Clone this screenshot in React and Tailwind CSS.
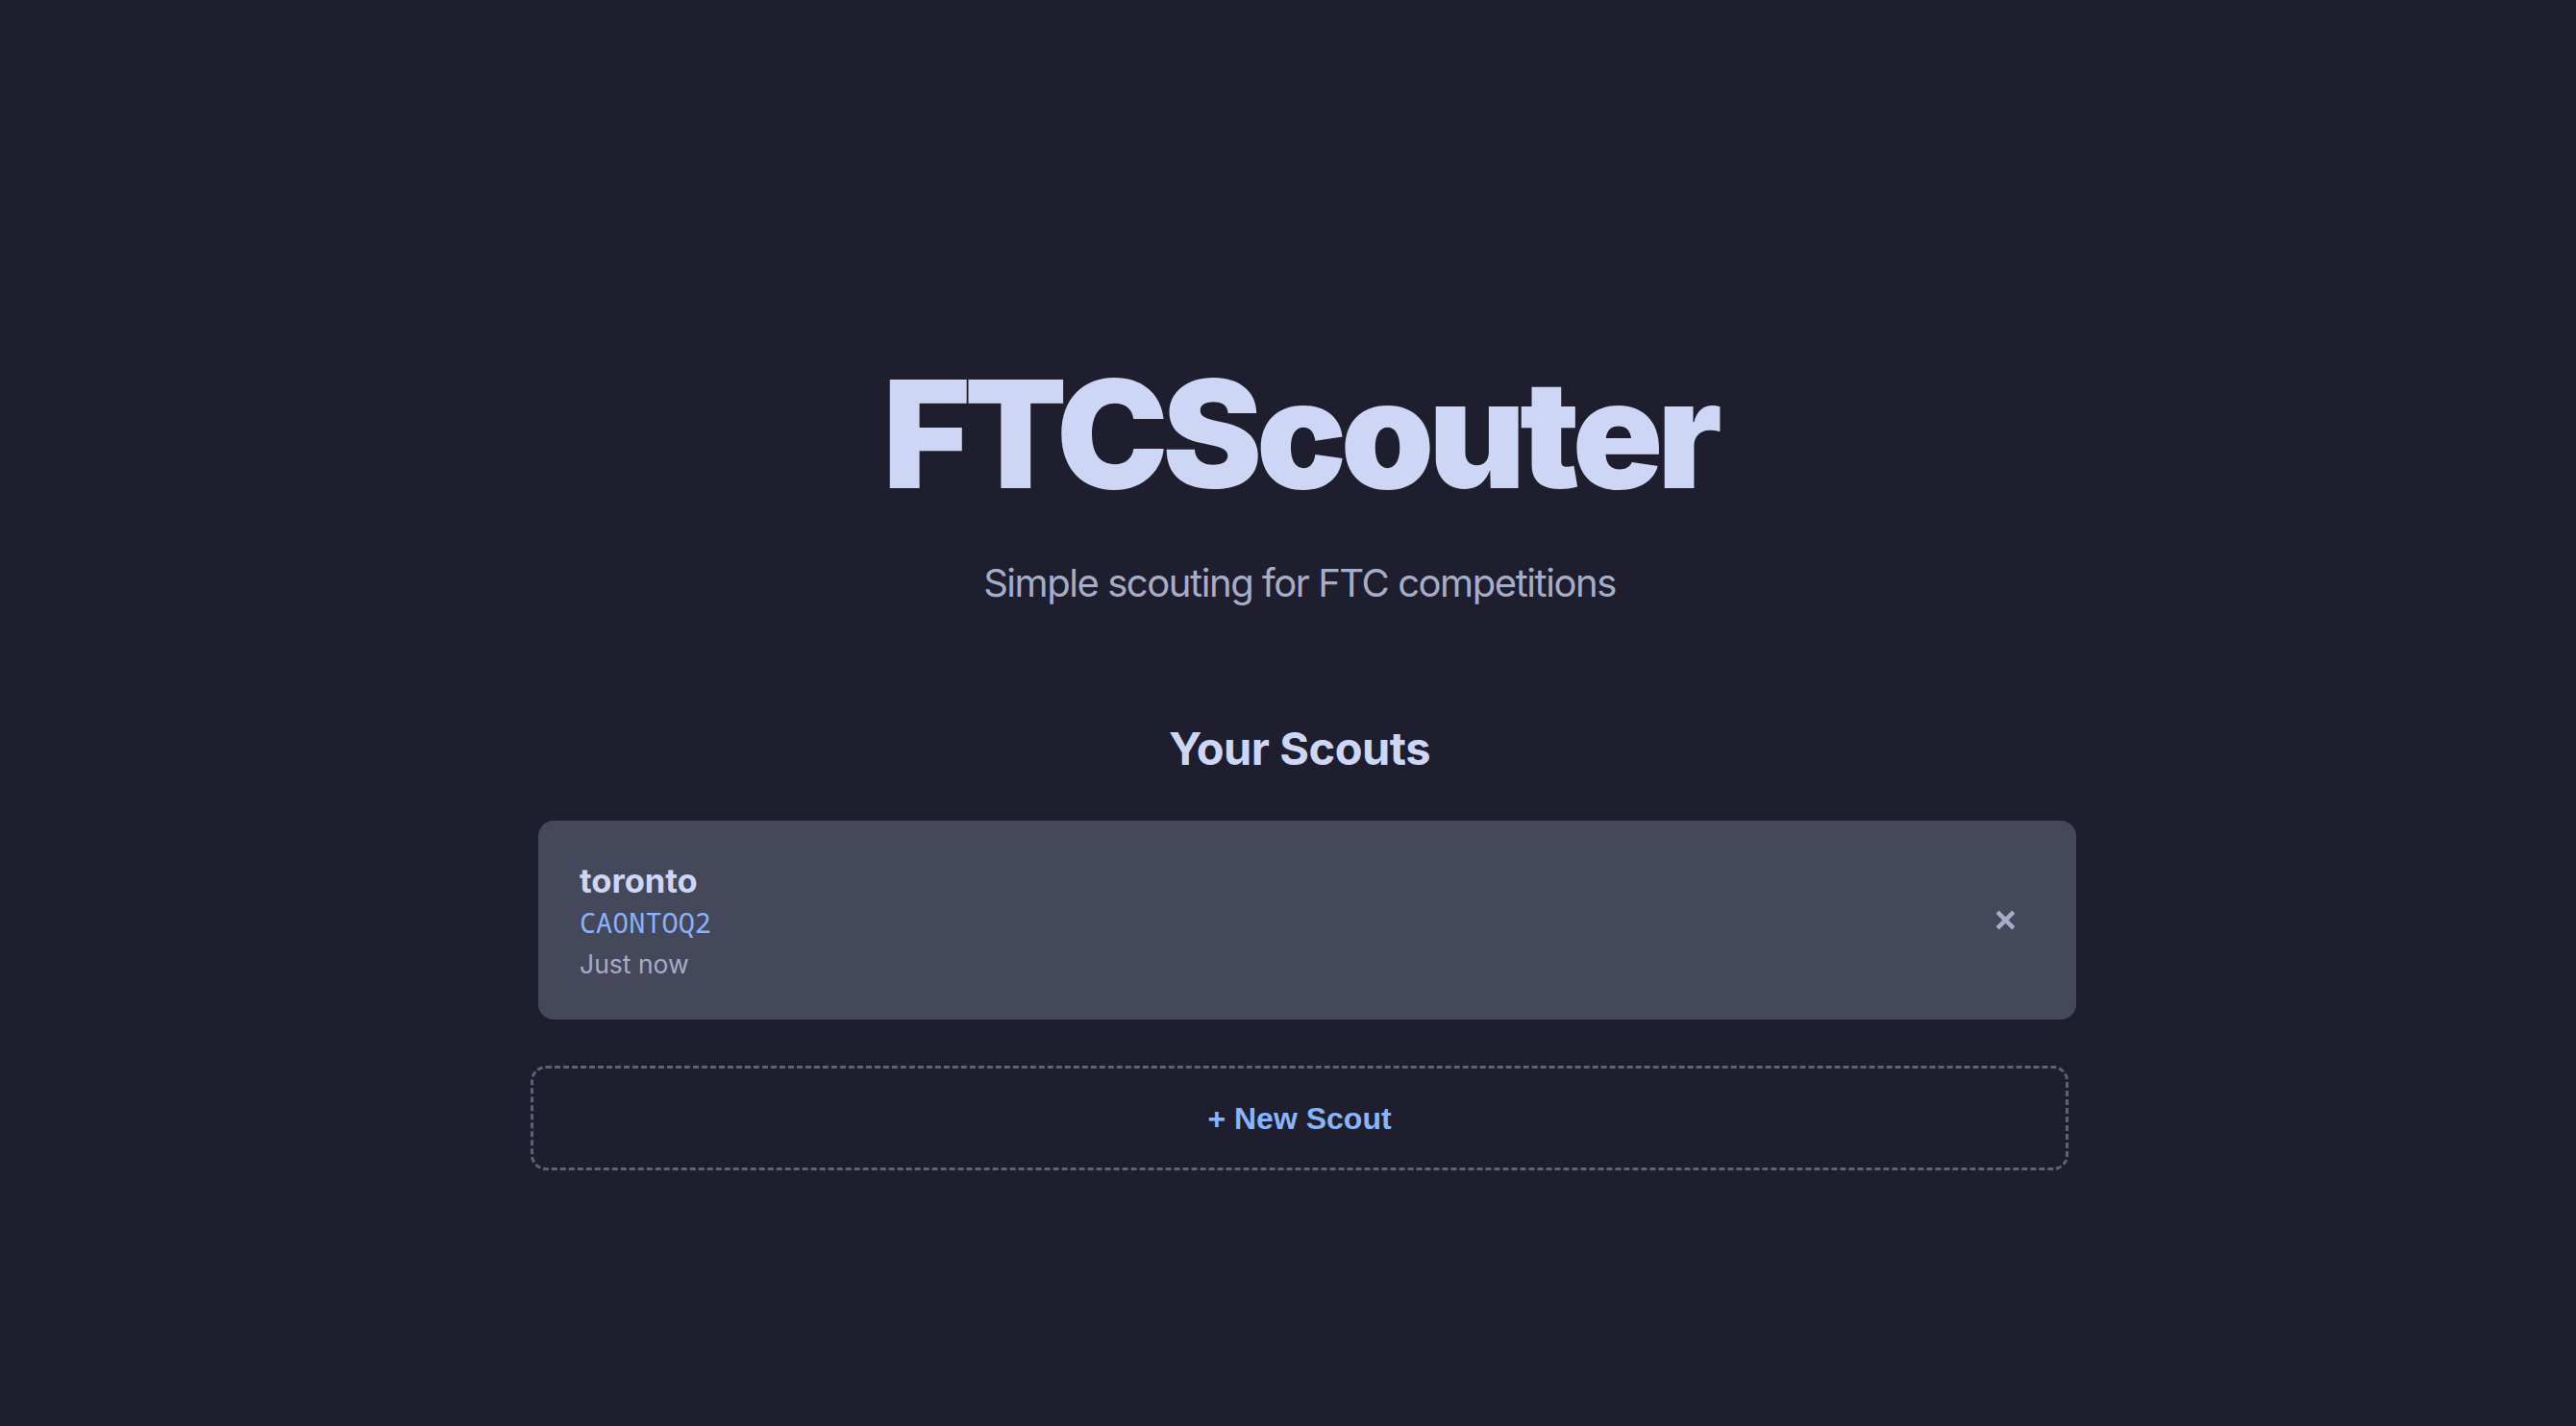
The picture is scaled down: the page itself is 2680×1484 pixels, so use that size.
import React from "react";

function Code({ text }) {
  return (
    <div className="text-[28.5px] leading-[42px] font-['Noto_Sans_Mono',monospace] text-[#89b4fa]">
      {text.split("").map((ch, i) =>
        ch === "0" ? (
          <span
            key={i}
            className="inline-block w-[0.6em] text-center font-['Noto_Sans',sans-serif]"
          >
            {ch}
          </span>
        ) : (
          <span key={i}>{ch}</span>
        )
      )}
    </div>
  );
}

export default function App() {
  const scouts = [{ name: "toronto", code: "CA0NTOQ2", time: "Just now" }];
  return (
    <div className="min-h-screen w-full bg-[#1e1e2e] flex justify-center pl-[24px] font-['Inter',sans-serif]">
      <div className="w-[1600px] flex flex-col items-center pt-[374px]">
        <h1 className="text-[156px] leading-[156px] font-black tracking-[-0.04em] text-[#cdd6f4]">
          FTCScouter
        </h1>
        <p className="mt-[53px] text-[40px] leading-[48px] tracking-[-0.036em] text-[#a6adc8]">
          Simple scouting for FTC competitions
        </p>
        <h2 className="mt-[120px] text-[47px] leading-[56px] font-bold tracking-[-0.01em] text-[#cdd6f4]">
          Your Scouts
        </h2>
        <div className="mt-[47px] w-full flex flex-col">
          {scouts.map((s) => (
            <div
              key={s.code}
              className="ml-[8px] mr-[-8px] h-[207px] rounded-[16px] bg-[#45475a] flex items-center justify-between pl-[43px] pr-[63px]"
            >
              <div className="flex flex-col pt-[5px]">
                <div className="text-[34.5px] leading-[44px] font-bold text-[#cdd6f4]">
                  {s.name}
                </div>
                <Code text={s.code} />
                <div className="text-[26.5px] leading-[44px] text-[#a6adc8]">
                  {s.time}
                </div>
              </div>
              <button className="flex items-center justify-center">
                <svg width="21" height="21" viewBox="0 0 21 21">
                  <path
                    d="M2.2 2.2 L18.8 18.8 M18.8 2.2 L2.2 18.8"
                    stroke="#a6adc8"
                    strokeWidth="4.5"
                    fill="none"
                  />
                </svg>
              </button>
            </div>
          ))}
          <button className="mt-[48px] h-[109px] w-full rounded-[16px] border-[3px] border-dashed border-[#5f6276] flex items-center justify-center font-['Liberation_Sans',Arial,sans-serif] text-[32px] font-bold text-[#89b4fa]">
            + New Scout
          </button>
        </div>
      </div>
    </div>
  );
}
